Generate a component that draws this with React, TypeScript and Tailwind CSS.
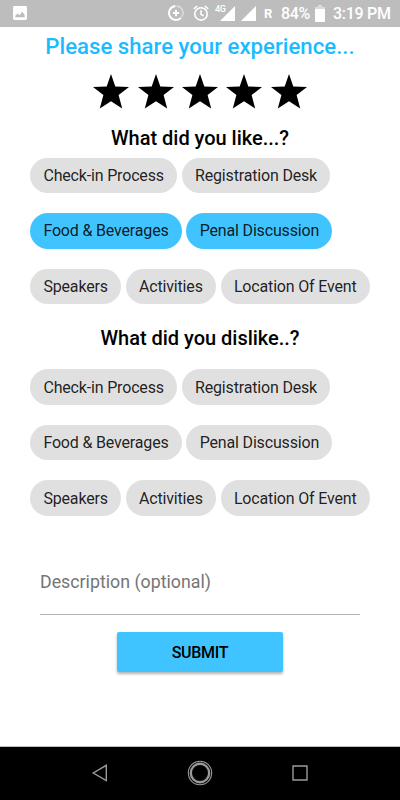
import { useState } from "react";
import clsx from "clsx";

const topics = [
  ["Check-in Process", "Registration Desk"],
  ["Food & Beverages", "Penal Discussion"],
  ["Speakers", "Activities", "Location Of Event"],
];

function StatusBar() {
  return (
    <header className="flex h-[26.5px] shrink-0 items-center bg-[#bdbdbd] pl-[13px] pr-[9px] font-medium text-white">
      <svg viewBox="3 3 18 18" className="size-[14px] fill-white" aria-hidden="true">
        <path d="M21 19V5c0-1.1-.9-2-2-2H5c-1.1 0-2 .9-2 2v14c0 1.1.9 2 2 2h14c1.1 0 2-.9 2-2zM6 17.5v-2l3-3 2.5 2.5 3.5-4.5 3 4v3z" fillRule="evenodd" />
      </svg>
      <svg
        viewBox="0 0 16 16"
        className="ml-auto size-4 fill-none stroke-white"
        strokeWidth="1.9"
        aria-hidden="true"
      >
        <path d="M8.5 1A7 7 0 0 1 13.7 12" opacity=".4" />
        <path d="M7.4 1A7 7 0 1 0 13 12.9M8 4.8v6.4M4.8 8h6.4" />
      </svg>
      <svg
        viewBox="0 0 16 16"
        className="ml-[9px] size-4 fill-none stroke-white"
        strokeWidth="1.6"
        aria-hidden="true"
      >
        <circle cx="8" cy="8.9" r="6.2" />
        <path d="M8 5.3v4l2.6 1.6M.8 3.9 4.2 1M15.2 3.9 11.8 1" />
      </svg>
      <div className="ml-[6px] flex items-start">
        <span className="-mt-px w-[5px] whitespace-nowrap text-[9px] leading-[8px] font-medium tracking-[-0.4px]">4G</span>
        <svg viewBox="0 0 15 15" className="size-[15px] fill-white" aria-hidden="true">
          <path d="M15 0v15H0z" />
        </svg>
      </div>
      <svg viewBox="0 0 15 15" className="ml-[6px] size-[15px] fill-white" aria-hidden="true">
        <path d="M15 0v15H0z" />
      </svg>
      <span className="ml-[8px] w-[17px] pt-px text-[13px] font-bold">R</span>
      <span className="w-[34px] pt-[2px] text-[16px] tracking-[-0.3px]">84%</span>
      <svg viewBox="0 0 10 17" className="h-[17px] w-[10px] fill-white" aria-hidden="true">
        <path d="M3 0h4v2h3v2H0V2h3z" opacity=".45" />
        <path d="M0 4h10v12q0 1-1 1H1q-1 0-1-1z" />
      </svg>
      <span className="ml-[8px] w-[58px] pt-[2px] whitespace-nowrap text-[16px] tracking-[-0.3px]">3:19 PM</span>
    </header>
  );
}

function Stars() {
  return (
    <div className="mt-[14px] flex justify-center gap-[8.4px]">
      {[1, 2, 3, 4, 5].map((n) => (
        <svg key={n} viewBox="0 0 36 35" className="h-[35px] w-9 fill-black" aria-hidden="true">
          <path d="M18 0 22.3 12.4 36 13 25.6 21.1 29.2 34.5 18 27.3 6.8 34.5 10.4 21.1 0 13 13.7 12.4z" />
        </svg>
      ))}
    </div>
  );
}

function TopicChips({ initial = [] }: { initial?: string[] }) {
  const [selected, setSelected] = useState(initial);

  const toggle = (topic: string) =>
    setSelected((prev) =>
      prev.includes(topic) ? prev.filter((t) => t !== topic) : [...prev, topic],
    );

  return (
    <div className="flex flex-col gap-[20px] pl-[30px]">
      {topics.map((row) => (
        <div key={row[0]} className="flex gap-[4.4px]">
          {row.map((topic) => (
            <button
              key={topic}
              type="button"
              onClick={() => toggle(topic)}
              className={clsx(
                "h-[35.6px] rounded-full px-[13.4px] pt-px text-[16px] tracking-[-0.17px] whitespace-nowrap text-black/87",
                selected.includes(topic) ? "bg-[#40c4ff]" : "bg-[#e0e0e0]",
              )}
            >
              {topic}
            </button>
          ))}
        </div>
      ))}
    </div>
  );
}

function NavBar() {
  return (
    <nav className="flex h-[54px] shrink-0 items-center justify-between border-t border-[#bdbdbd] bg-black px-[91px] pb-px">
      <svg viewBox="0 0 18 18" className="size-[18px] fill-none stroke-[#9a9a9a]" strokeWidth="1.4">
        <path d="M15.3 1.3v15.2L2.3 9z" />
      </svg>
      <svg viewBox="0 0 26 26" className="size-[26px] fill-none stroke-[#9a9a9a]">
        <circle cx="13" cy="13" r="11.7" strokeWidth="1.1" />
        <circle cx="13" cy="13" r="9.2" strokeWidth="2.4" />
      </svg>
      <svg viewBox="0 0 18 18" className="size-[18px] fill-none stroke-[#9a9a9a]" strokeWidth="1.4">
        <path d="M2 2h14v14H2z" />
      </svg>
    </nav>
  );
}

export default function App() {
  return (
    <div className="flex h-[800px] w-[400px] flex-col overflow-hidden bg-white font-[Roboto,sans-serif] text-black">
      <StatusBar />

      <main className="flex flex-1 flex-col">
        <h1 className="mt-[5px] text-center text-[22.2px] leading-[28px] font-medium text-[#1abcff]">
          Please share your experience...
        </h1>
        <Stars />

        <h2 className="mt-[16px] mb-[7px] text-center text-[20px] leading-[26px] font-medium tracking-[-0.02px]">
          What did you like...?
        </h2>
        <TopicChips initial={["Food & Beverages", "Penal Discussion"]} />

        <h2 className="mt-[21px] mb-[18px] text-center text-[20px] leading-[26px] font-medium tracking-[-0.02px]">
          What did you dislike..?
        </h2>
        <TopicChips />

        <input
          placeholder="Description (optional)"
          className="mx-10 mt-[49px] h-[50px] border-b border-[#b5b5b5] pb-[15px] text-[17.78px] tracking-[0.01px] outline-none placeholder:text-[#757575]"
        />
        <button
          type="button"
          className="mx-auto mt-[17px] h-10 w-[166px] rounded-[2px] bg-[#40c4ff] pt-[2px] text-[16px] font-medium tracking-[-0.3px] shadow-[0_2px_3px_rgba(0,0,0,0.3)]"
        >
          SUBMIT
        </button>
      </main>

      <NavBar />
    </div>
  );
}
